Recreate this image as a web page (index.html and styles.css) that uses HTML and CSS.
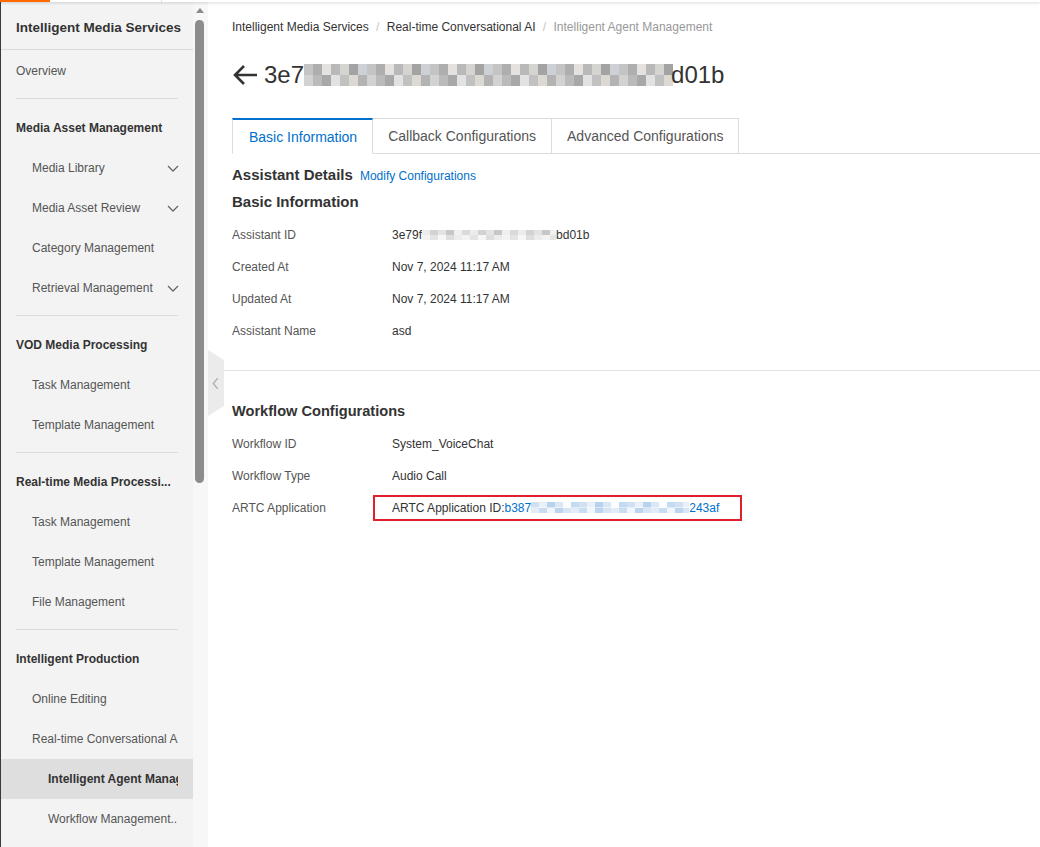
FILE: index.html
```html
<!DOCTYPE html>
<html lang="en">
<head>
    <meta charset="UTF-8">
    <meta name="viewport" content="width=device-width, initial-scale=1.0">
    <title>Intelligent Agent Management</title>
    <link rel="stylesheet" href="styles.css">
</head>
<body>
    <div class="topbar">
        <span class="topbar-brand"></span>
        <span class="topbar-sep"></span>
    </div>

    <div class="layout">
        <aside class="sidebar">
            <div class="side-title">Intelligent Media Services</div>
            <nav class="side-nav">
                <a class="nav-item">Overview</a>
                <div class="nav-divider"></div>

                <div class="nav-group">Media Asset Management</div>
                <a class="nav-item lv2">Media Library <svg class="chev" viewBox="0 0 12 7"><path d="M1 1l5 5 5-5"/></svg></a>
                <a class="nav-item lv2">Media Asset Review <svg class="chev" viewBox="0 0 12 7"><path d="M1 1l5 5 5-5"/></svg></a>
                <a class="nav-item lv2">Category Management</a>
                <a class="nav-item lv2">Retrieval Management <svg class="chev" viewBox="0 0 12 7"><path d="M1 1l5 5 5-5"/></svg></a>
                <div class="nav-divider"></div>

                <div class="nav-group">VOD Media Processing</div>
                <a class="nav-item lv2">Task Management</a>
                <a class="nav-item lv2">Template Management</a>
                <div class="nav-divider"></div>

                <div class="nav-group">Real-time Media Processi...</div>
                <a class="nav-item lv2">Task Management</a>
                <a class="nav-item lv2">Template Management</a>
                <a class="nav-item lv2">File Management</a>
                <div class="nav-divider"></div>

                <div class="nav-group">Intelligent Production</div>
                <a class="nav-item lv2">Online Editing</a>
                <a class="nav-item lv2"><span class="clip">Real-time Conversational AI</span></a>
                <a class="nav-item lv3 active"><span class="clip">Intelligent Agent Management</span></a>
                <a class="nav-item lv3">Workflow Management..</a>
            </nav>
        </aside>

        <div class="side-scroll">
            <span class="scroll-up"></span>
            <span class="scroll-thumb"></span>
        </div>

        <main class="main">
            <div class="handle-col">
                <div class="collapse-handle">
                    <svg viewBox="0 0 6 12"><path d="M5 1L1 6l4 5"/></svg>
                </div>
            </div>

            <div class="content">
                <section class="section first">
                    <div class="breadcrumb">
                        <span>Intelligent Media Services</span>
                        <span class="crumb-sep">/</span>
                        <span>Real-time Conversational AI</span>
                        <span class="crumb-sep">/</span>
                        <span class="crumb-current">Intelligent Agent Management</span>
                    </div>

                    <h1 class="page-title">
                        <svg class="back" viewBox="0 0 26 22"><path d="M25 11H3M12 2l-9 9 9 9"/></svg>
                        <span>3e7</span><span class="blur blur-title"></span><span class="title-tail">d01b</span>
                    </h1>

                    <div class="tabs">
                        <div class="tab active">Basic Information</div>
                        <div class="tab">Callback Configurations</div>
                        <div class="tab">Advanced Configurations</div>
                        <div class="tab-rest"></div>
                    </div>

                    <div class="details-head">
                        <h2>Assistant Details</h2>
                        <a class="link">Modify Configurations</a>
                    </div>
                    <h3 class="block-title">Basic Information</h3>

                    <div class="kv">
                        <div class="kv-row"><span class="kv-label">Assistant ID</span><span class="kv-value">3e79f<span class="blur blur-id"></span>bd01b</span></div>
                        <div class="kv-row"><span class="kv-label">Created At</span><span class="kv-value">Nov 7, 2024 11:17 AM</span></div>
                        <div class="kv-row"><span class="kv-label">Updated At</span><span class="kv-value">Nov 7, 2024 11:17 AM</span></div>
                        <div class="kv-row"><span class="kv-label">Assistant Name</span><span class="kv-value">asd</span></div>
                    </div>
                </section>

                <section class="section second">
                    <h3 class="block-title">Workflow Configurations</h3>
                    <div class="kv">
                        <div class="kv-row"><span class="kv-label">Workflow ID</span><span class="kv-value">System_VoiceChat</span></div>
                        <div class="kv-row"><span class="kv-label">Workflow Type</span><span class="kv-value">Audio Call</span></div>
                        <div class="kv-row">
                            <span class="kv-label">ARTC Application</span>
                            <span class="kv-value highlight">ARTC Application ID:<a class="link">b387<span class="blur blur-app"></span>243af</a></span>
                        </div>
                    </div>
                </section>
            </div>
        </main>
    </div>
</body>
</html>
```

FILE: styles.css
```css
* {
    box-sizing: border-box;
}
html, body {
    margin: 0;
    height: 100%;
}
body {
    font-family: "Liberation Sans", Arial, sans-serif;
    font-size: 12px;
    color: #333;
    background: #fff;
    overflow: hidden;
}
.topbar {
    height: 2px;
    position: relative;
    z-index: 2;
    display: flex;
    background: #fff;
    box-shadow: 0 1px 3px rgba(0, 0, 0, 0.18);
}
.topbar-brand {
    width: 50px;
    background: #ff6a00;
}
.topbar-sep {
    width: 1px;
    margin-left: 111px;
    background: #e0e0e0;
}
.layout {
    display: flex;
    height: calc(100vh - 2px);
}

/* sidebar */
.sidebar {
    width: 193px;
    flex-shrink: 0;
    background: #f3f3f3;
    border-left: 1px solid #3a3a3a;
    overflow: hidden;
}
.side-title {
    height: 48px;
    padding: 16px 15px 0;
    font-size: 13.5px;
    font-weight: bold;
    line-height: 20px;
    color: #333;
    border-bottom: 1px solid #dcdcdc;
    white-space: nowrap;
}
.side-nav {
    padding-top: 1px;
}
.nav-item, .nav-group {
    height: 40px;
    display: flex;
    align-items: center;
    justify-content: space-between;
    padding: 0 15px 0 15px;
    white-space: nowrap;
    overflow: hidden;
    color: #555;
    text-decoration: none;
}
.nav-group {
    font-weight: bold;
    color: #333;
}
.nav-item.lv2 {
    padding-left: 31px;
}
.nav-item.lv3 {
    padding-left: 47px;
}
.nav-item.active {
    background: #dedede;
    font-weight: bold;
    color: #333;
}
.nav-divider {
    height: 1px;
    margin: 7px 15px 9px;
    background: #dcdcdc;
}
.chev {
    width: 12px;
    height: 7px;
    fill: none;
    stroke: #666;
    stroke-width: 1.3;
    margin-right: -1px;
}
.clip {
    overflow: hidden;
    display: block;
    width: 100%;
}
.side-scroll {
    width: 15px;
    flex-shrink: 0;
    background: #f7f7f7;
    display: flex;
    flex-direction: column;
    align-items: center;
    padding: 6px 2px 0 0;
}
.scroll-up {
    width: 0;
    height: 0;
    border-left: 4px solid transparent;
    border-right: 4px solid transparent;
    border-bottom: 5px solid #8a8a8a;
}
.scroll-thumb {
    width: 9px;
    height: 463px;
    margin-top: 7px;
    border-radius: 5px;
    background: #8c8c8c;
}

/* main */
.main {
    flex: 1;
    display: flex;
    min-width: 0;
}
.handle-col {
    width: 16px;
    flex-shrink: 0;
    padding-top: 348px;
}
.collapse-handle {
    width: 16px;
    height: 66px;
    background: #ebebeb;
    clip-path: polygon(0 0, 100% 15%, 100% 85%, 0 100%);
    display: flex;
    align-items: center;
    justify-content: center;
}
.collapse-handle svg {
    width: 7px;
    height: 13px;
    fill: none;
    stroke: #b0b0b0;
    stroke-width: 1.3;
    margin-left: -2px;
}
.content {
    flex: 1;
    min-width: 0;
}
.section {
    padding-left: 8px;
}
.section.first {
    padding-top: 15px;
    padding-bottom: 23px;
    border-bottom: 1px solid #e3e3e3;
}
.section.second {
    padding-top: 29px;
}
.breadcrumb {
    line-height: 20px;
    color: #333;
    white-space: nowrap;
}
.crumb-sep {
    color: #c4c4c4;
    margin: 0 4px;
}
.crumb-current {
    color: #999;
}
.page-title {
    margin: 22px 0 0;
    height: 32px;
    display: flex;
    align-items: center;
    font-size: 24px;
    font-weight: normal;
    color: #333;
    white-space: nowrap;
}
.back {
    width: 26px;
    height: 22px;
    fill: none;
    stroke: #333;
    stroke-width: 2.6;
    margin-right: 6px;
}
.title-tail {
    margin-left: -2px;
}
.blur {
    display: inline-block;
}
.blur-title {
    width: 369px;
    height: 22px;
    background:
        repeating-linear-gradient(90deg, #c4c4c4 0 9px, #aeaeae 9px 18px, #e4e1de 18px 27px, #b9b9b9 27px 36px, #d6d4d1 36px 45px, #a3a3a3 45px 54px, #cdd1d6 54px 63px) top / 100% 50% no-repeat,
        repeating-linear-gradient(90deg, #d2d2d2 0 9px, #bababa 9px 18px, #a8a8a8 18px 27px, #e2e2e2 27px 36px, #c1c1c1 36px 45px, #dcd8d2 45px 54px, #b3b3b3 54px 63px) bottom / 100% 50% no-repeat;
}
.blur-id {
    width: 134px;
    height: 10px;
    vertical-align: -1px;
    background:
        repeating-linear-gradient(90deg, #ececec 0 8px, #d2d2d2 8px 16px, #e3e3e3 16px 24px, #c7c7c7 24px 32px, #f0f0f0 32px 40px, #dadada 40px 48px) top / 100% 50% no-repeat,
        repeating-linear-gradient(90deg, #f3f3f3 0 8px, #e4e4e4 8px 16px, #f6f6f6 16px 24px, #dedede 24px 32px, #ececec 32px 40px) bottom / 100% 50% no-repeat;
}
.blur-app {
    width: 158px;
    height: 11px;
    vertical-align: -1px;
    background:
        repeating-linear-gradient(90deg, #cfe1f3 0 8px, #e8f1fa 8px 16px, #b7d2ec 16px 24px, #dae8f6 24px 32px, #fafcfe 32px 40px, #c4daf0 40px 48px) top / 100% 50% no-repeat,
        repeating-linear-gradient(90deg, #e2edf8 0 8px, #c9ddf1 8px 16px, #f1f6fc 16px 24px, #bcd5ee 24px 32px, #d6e6f5 32px 40px) bottom / 100% 50% no-repeat;
}

/* tabs */
.tabs {
    display: flex;
    margin-top: 27px;
    height: 36px;
}
.tab {
    height: 36px;
    padding: 0 15px;
    display: flex;
    align-items: center;
    font-size: 14px;
    color: #555;
    background: #fff;
    border: 1px solid #dcdcdc;
    border-left: none;
}
.tab.active {
    color: #0070cc;
    border-top: 2px solid #0070cc;
    border-left: 1px solid #dcdcdc;
    border-bottom-color: transparent;
    padding-top: 1px;
    padding-left: 16px;
}
.tab-rest {
    flex: 1;
    border-bottom: 1px solid #dcdcdc;
}
.details-head {
    display: flex;
    align-items: baseline;
    margin-top: 10px;
    height: 22px;
}
.details-head h2 {
    margin: 0;
    font-size: 15px;
    font-weight: bold;
    line-height: 22px;
    color: #333;
}
.link {
    color: #0070cc;
    text-decoration: none;
}
.details-head .link {
    margin-left: 7px;
}
.block-title {
    margin: 5px 0 0;
    font-size: 15px;
    font-weight: bold;
    line-height: 22px;
    color: #333;
}
.second .block-title {
    font-size: 14.6px;
    margin-top: 0;
}
.kv {
    margin-top: 6px;
}
.kv-row {
    display: flex;
    align-items: center;
    height: 32px;
}
.kv-label {
    width: 160px;
    color: #555;
}
.kv-value {
    color: #333;
    white-space: nowrap;
}
.kv-value.highlight {
    margin-left: -19px;
    padding: 4px 21px 4px 17px;
    border: 2px solid #e2202c;
}
```
